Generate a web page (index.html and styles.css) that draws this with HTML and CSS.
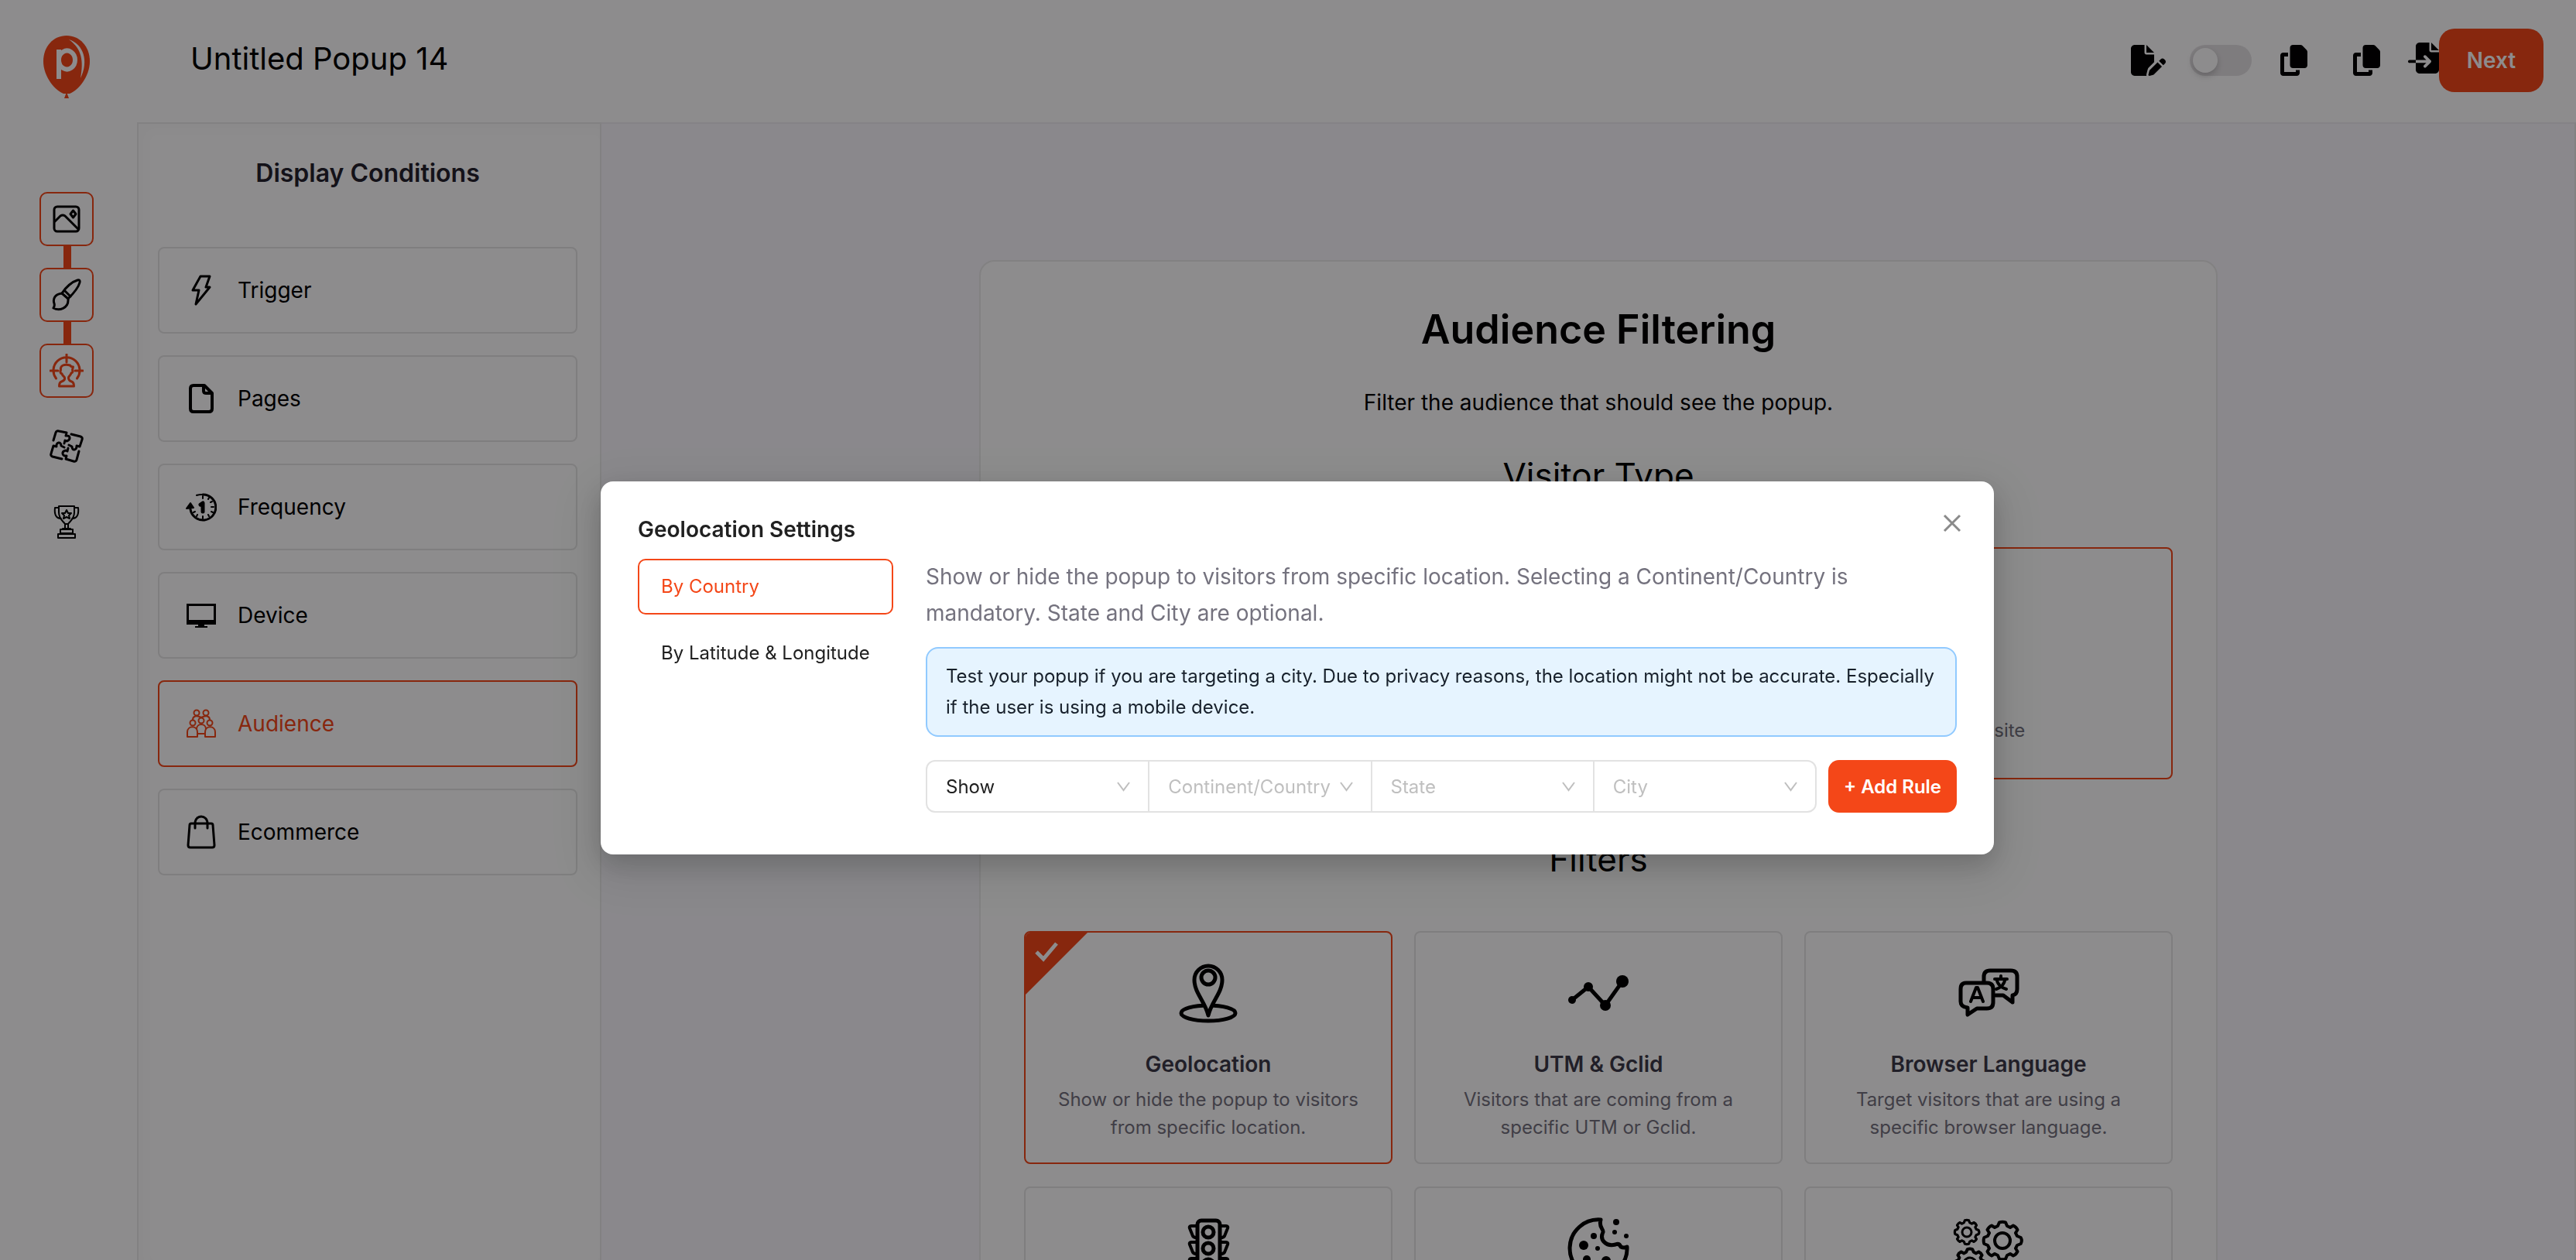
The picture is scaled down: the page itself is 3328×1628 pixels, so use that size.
FILE: index.html
```html
<!DOCTYPE html>
<html lang="en">
<head>
  <meta charset="UTF-8" />
  <title>Untitled Popup 14</title>
  <link rel="stylesheet" href="styles.css">
</head>
<body>
  <header class="topbar">
    <a class="logo" href="#" aria-label="Home">
      <svg width="60" height="82" viewBox="0 0 60 82">
        <path d="M30 0C13 0 0 14 0 33c0 20 15 38 26 42h8c11-4 26-22 26-42C60 14 47 0 30 0z" fill="#f44718"/>
        <path d="M30 73l-3 8h6z" fill="#f44718"/>
        <path d="M20 56V18M20 31a10.500 12 0 1 1 0 1" fill="none" stroke="#fff" stroke-width="6"/>
        <path d="M33 5c19 6 26 28 15 50 4-22 2-38-15-50z" fill="#fff"/>
      </svg>
    </a>
    <h1>Untitled Popup 14</h1>
    <div class="actions">
      <button class="icon-btn edit" aria-label="Edit">
        <svg width="45" height="40" viewBox="0 0 576 512"><path d="M0 64C0 28.700 28.700 0 64 0H224V128c0 17.700 14.300 32 32 32H384V285.700l-86.800 86.800c-10.300 10.300-17.500 23.100-21 37.200l-18.700 74.900c-2.300 9.200-1.800 18.800 1.300 27.500H64c-35.300 0-64-28.700-64-64V64zm384 64H256V0L384 128zM549.800 235.700l14.400 14.400c15.600 15.600 15.600 40.900 0 56.600l-29.400 29.400-71-71 29.400-29.400c15.600-15.600 40.900-15.600 56.600 0zM311.900 417L441.100 287.800l71 71L382.900 487.900c-4.100 4.100-9.200 7-14.900 8.400l-60.100 15c-5.500 1.400-11.200-.2-15.200-4.200s-5.600-9.700-4.200-15.200l15-60.100c1.400-5.600 4.300-10.800 8.400-14.900z"/></svg>
      </button>
      <input class="switch" type="checkbox" role="switch" aria-label="Published">
      <button class="icon-btn copy" aria-label="Copy">
        <svg width="35" height="40" viewBox="0 0 448 512"><path d="M208 0H332.100c12.700 0 24.900 5.100 33.900 14.100l67.900 67.900c9 9 14.100 21.200 14.100 33.900V336c0 26.500-21.500 48-48 48H208c-26.500 0-48-21.500-48-48V48c0-26.500 21.500-48 48-48zM48 128h80v64H64V448H256V416h64v48c0 26.500-21.500 48-48 48H48c-26.500 0-48-21.500-48-48V176c0-26.500 21.500-48 48-48z"/></svg>
      </button>
      <button class="icon-btn duplicate" aria-label="Duplicate">
        <svg width="35" height="40" viewBox="0 0 448 512"><path d="M208 0H332.100c12.700 0 24.900 5.100 33.900 14.100l67.900 67.900c9 9 14.100 21.200 14.100 33.900V336c0 26.500-21.500 48-48 48H208c-26.500 0-48-21.500-48-48V48c0-26.500 21.500-48 48-48zM48 128h80v64H64V448H256V416h64v48c0 26.500-21.500 48-48 48H48c-26.500 0-48-21.500-48-48V176c0-26.500 21.500-48 48-48z"/></svg>
      </button>
      <button class="icon-btn import" aria-label="Import">
        <svg width="40" height="40" viewBox="0 0 512 512"><path d="M128 64c0-35.300 28.700-64 64-64H352V128c0 17.700 14.300 32 32 32H512V448c0 35.300-28.700 64-64 64H192c-35.300 0-64-28.700-64-64V336H302.100l-39 39c-9.400 9.400-9.400 24.600 0 33.900s24.600 9.400 33.900 0l80-80c9.400-9.400 9.400-24.600 0-33.900l-80-80c-9.400-9.400-24.600-9.400-33.900 0s-9.400 24.600 0 33.900l39 39H128V64zm0 224v48H24c-13.300 0-24-10.700-24-24s10.700-24 24-24H128zM512 128H384V0L512 128z"/></svg>
      </button>
      <button class="next">Next</button>
    </div>
  </header>

  <div class="shell">
    <!-- STEPS -->
    <nav class="rail" aria-label="Steps">
      <a class="step done" href="#" aria-label="Template">
        <svg class="line" width="44" height="44" viewBox="0 0 44 44">
          <rect x="6" y="6" width="32" height="32" rx="4"/>
          <path d="M7 25l7-7q3-2 6 0l17 17M30.500 11l3.500 4.500-3.500 4.500-3.500-4.500z"/>
        </svg>
      </a>
      <a class="step done" href="#" aria-label="Design">
        <svg class="line" width="44" height="44" viewBox="0 0 44 44">
          <path d="M16 20C21 12 29 5 36 3q4-1 3 3c-2 8-9 15-15 21"/>
          <path d="M16 20c-9 1-12 7-10 13 1 3 0 4-1 6 7 4 20 1 19-12zM20 17l7 7M16 20l8 7" />
        </svg>
      </a>
      <a class="step current" href="#" aria-label="Conditions">
        <svg class="line" width="44" height="44" viewBox="0 0 44 44">
          <path d="M8.500 32a17 17 0 1 1 27 0M22 1v10M1 22h10M33 22h10"/>
          <path d="M14.500 21q-1.500 4 1.500 5c1 3 3 3 3.500 5s-1 4-4 5q-3 1-3 6h19q0-5-3-6c-3-1-4-3-4-5s3-3 3.500-6q3-1 1.500-4l1-4q-3 0-4-2c-7-2-13 0-12 6z"/>
        </svg>
      </a>
      <a class="step" href="#" aria-label="Integrations">
        <svg class="line" width="44" height="44" viewBox="0 0 44 44">
          <path d="M5 14L8 4q1-3 4-2l10 2-1 4c6-1 7 5 1 7l-2-1-1 4"/>
          <path d="M28 6l12 3q3 1 2 4l-3 9-4-1c0 6-6 7-6 1l-4-2"/>
          <path d="M38 28l-3 11q-1 3-4 2l-10-3 1-4c-6 1-7-6-1-7l2 1 1-4"/>
          <path d="M16 38L4 35q-3-1-2-4l3-10 4 1c-1-6 6-7 6-1l4 2"/>
        </svg>
      </a>
      <a class="step" href="#" aria-label="Launch">
        <svg class="line thin" width="44" height="44" viewBox="0 0 44 44">
          <path d="M12 1h20v8c0 8-5 11-8 15h-4c-3-4-8-7-8-15zM12 3H7c-1 8 1 14 8 14M32 3h5c1 8-1 14-8 14M20 24v6M24 24v6M17 30h10M14 31h16v5H14zM11 37h22v5H11z"/>
          <path d="M22 6l2 4 4 0-3 3 1 4-4-2-4 2 1-4-3-3 4 0z"/>
        </svg>
      </a>
    </nav>

    <!-- DISPLAY CONDITIONS -->
    <aside class="sidebar">
      <h2>Display Conditions</h2>
      <nav class="conditions" aria-label="Display Conditions">
        <a class="condition" href="#">
          <svg class="line" width="40" height="40" viewBox="0 0 40 40"><path d="M19 2h12l-5 14h5L13 38l4-18H9z"/></svg>
          Trigger
        </a>
        <a class="condition" href="#">
          <svg class="line bold" width="40" height="40" viewBox="0 0 40 40"><path d="M10 3h14l10 10v20q0 4-4 4H10q-4 0-4-4V7q0-4 4-4zM23 4v6q0 3 3 3h7"/></svg>
          Pages
        </a>
        <a class="condition" href="#">
          <svg class="line thin" width="40" height="40" viewBox="0 0 40 40">
            <path d="M14 5a17 17 0 0 1 8-1"/>
            <path d="M22 4a16.500 16.500 0 1 1-16 19" stroke-width="3"/>
            <path d="M22 6v3M30 8l-1 2M34 13l-2 1M36 20h-3M35 27l-2-1M30 32l-1-2M22 35v-3M14 32l1-2M10 27l2-1"/>
            <path d="M1 22l5-7 4 6z" fill="#000"/>
            <path d="M19 17l3-2v11" stroke-width="5"/>
          </svg>
          Frequency
        </a>
        <a class="condition" href="#">
          <svg width="40" height="40" viewBox="0 0 40 40"><path d="M1 5h38v27H24v2h4v2H12v-2h4v-2H1zm3 3v18h32V8z" fill-rule="evenodd"/></svg>
          Device
        </a>
        <a class="condition active" href="#">
          <svg class="line thin" width="40" height="40" viewBox="0 0 40 40">
            <circle cx="14" cy="6" r="3.500"/><circle cx="26" cy="6" r="3.500"/><circle cx="9" cy="19" r="3.500"/><circle cx="31" cy="19" r="3.500"/><circle cx="20" cy="16" r="3.500"/>
            <path d="M2 37v-6c0-9 13-9 13 0v6zM25 37v-6c0-9 13-9 13 0v6zM15 33h10M14 27c0-8 12-8 12 0M9 15c0-5 5-6 11-3M31 15c0-5-5-6-11-3"/>
          </svg>
          Audience
        </a>
        <a class="condition" href="#">
          <svg class="line" width="40" height="44" viewBox="0 0 40 44"><path d="M7 11h26q2 0 2 2l2 26q0 3-3 3H6q-3 0-3-3l2-26q0-2 2-2zM12 17v-6c0-12 16-12 16 0v6"/></svg>
          Ecommerce
        </a>
      </nav>
    </aside>

    <main class="canvas">
      <section class="panel">
        <h2>Audience Filtering</h2>
        <p class="lead">Filter the audience that should see the popup.</p>

        <h3>Visitor Type</h3>
        <div class="types">
          <button class="type selected"><span>All the visitors on your website</span></button>
        </div>

        <h3>Filters</h3>
        <div class="filters">
          <button class="filter selected">
            <svg class="mark" width="80" height="80" viewBox="0 0 80 80">
              <path d="M0 0h80L0 80z" fill="#f44718"/>
              <path d="M14 25l9 9 17-20" fill="none" stroke="#fff" stroke-width="5"/>
            </svg>
            <svg class="heavy" width="80" height="80" viewBox="0 0 80 80">
              <ellipse cx="40" cy="66" rx="35" ry="10"/>
              <path d="M40 69C36 51 22 40 22 23a18 18 0 0 1 36 0C58 40 44 51 40 69z" fill="#fff"/>
              <circle cx="40" cy="20" r="9"/>
            </svg>
            <strong>Geolocation</strong>
            <span>Show or hide the popup to visitors from specific location.</span>
          </button>
          <button class="filter">
            <svg class="heavy" width="80" height="80" viewBox="0 0 80 80">
              <path d="M6 49l21-17 22 24 22-31"/>
              <g fill="#000" stroke="none"><circle cx="6" cy="49" r="5"/><circle cx="27" cy="32" r="6"/><circle cx="49" cy="56" r="7"/><circle cx="71" cy="25" r="8"/></g>
            </svg>
            <strong>UTM &amp; Gclid</strong>
            <span>Visitors that are coming from a specific UTM or Gclid.</span>
          </button>
          <button class="filter">
            <svg class="heavy" width="80" height="80" viewBox="0 0 80 80">
              <path d="M34 25v-6q0-8 8-8h27q8 0 8 8v16q0 7-6 8v9L59 43h-10"/>
              <path d="M11 27h27q8 0 8 8v17q0 8-8 8H25L13 68v-9q-9-1-9-8V35q0-8 7-8z"/>
              <path d="M17 51l7-18h2l7 18M20 46h10M48 22h16M56 18v4M51 24q2 8 12 11M61 24q-2 8-11 11" stroke-width="4"/>
            </svg>
            <strong>Browser Language</strong>
            <span>Target visitors that are using a specific browser language.</span>
          </button>
          <button class="filter" aria-label="Traffic Source">
            <svg class="heavy" width="80" height="80" viewBox="0 0 80 80">
              <rect x="26" y="4" width="29" height="72" rx="5"/>
              <circle cx="40" cy="19" r="7"/><circle cx="40" cy="40" r="7"/><circle cx="40" cy="61" r="7"/>
              <path d="M25 11h-7q-3 0-2 3l4 10q1 2 5 2M25 32h-7q-3 0-2 3l4 10q1 2 5 2M25 53h-7q-3 0-2 3l4 10q1 2 5 2M56 11h7q3 0 2 3l-4 10q-1 2-5 2M56 32h7q3 0 2 3l-4 10q-1 2-5 2M56 53h7q3 0 2 3l-4 10q-1 2-5 2" stroke-width="4"/>
            </svg>
          </button>
          <button class="filter" aria-label="Cookie">
            <svg class="heavy" width="80" height="80" viewBox="0 0 80 80">
              <path d="M43 3A37 37 0 1 0 77 38q-4 2-8 0-2-5-7-3c-12 3-21-6-16-16 1-4-6-6-3-16z"/>
              <g fill="#000" stroke="none"><circle cx="21" cy="36" r="6"/><circle cx="34" cy="24" r="4"/><circle cx="39" cy="40" r="3"/><circle cx="63" cy="6" r="4"/><circle cx="61" cy="19" r="3"/><circle cx="76" cy="24" r="3"/><circle cx="25" cy="54" r="5"/><circle cx="50" cy="56" r="6"/></g>
            </svg>
          </button>
          <button class="filter" aria-label="Advanced">
            <svg class="line" width="92" height="84" viewBox="0 0 92 84">
              <defs>
                <path id="gear" d="M23.700-4Q26 0 23.700 4L19 6 17 10l2.500 4q-2 4-5.500 5.500L10 17l-4 2-2 4.700q-4 1.300-8 0L-6 19l-4-2-4 2.500q-4-2-5.500-5.500l2.500-4-2-4-4.700-2q-1.300-4 0-8L-19-6l2-4-2.500-4q2-4 5.500-5.500L-10-17l4-2 2-4.700q4-1.300 8 0L6-19l4 2 4-2.500q4 2 5.500 5.500L17-10l2 4z"/>
              </defs>
              <use href="#gear" transform="translate(64 30)" stroke-width="4"/><circle cx="64" cy="30" r="10" stroke-width="4"/>
              <use href="#gear" transform="translate(18 19) scale(.64)" stroke-width="5"/><circle cx="18" cy="19" r="6"/>
              <use href="#gear" transform="translate(22 60) scale(.8)" stroke-width="5"/><circle cx="22" cy="60" r="8"/>
            </svg>
          </button>
        </div>
      </section>
    </main>
  </div>

  <!-- GEOLOCATION MODAL -->
  <div class="overlay">
    <div class="modal" role="dialog" aria-modal="true" aria-labelledby="modal-title">
      <div class="modal-head">
        <h2 id="modal-title">Geolocation Settings</h2>
        <button class="close" aria-label="Close">
          <svg width="24" height="24" viewBox="0 0 24 24"><path d="M2 2l20 20M22 2L2 22" stroke="#8a8a8a" stroke-width="3"/></svg>
        </button>
      </div>
      <div class="modal-body">
        <div class="tabs" role="tablist">
          <button class="tab active" role="tab" aria-selected="true">By Country</button>
          <button class="tab" role="tab">By Latitude &amp; Longitude</button>
        </div>
        <div class="settings">
          <p class="hint">Show or hide the popup to visitors from specific location. Selecting a Continent/Country is mandatory. State and City are optional.</p>
          <p class="alert">Test your popup if you are targeting a city. Due to privacy reasons, the location might not be accurate. Especially if the user is using a mobile device.</p>
          <form class="rule">
            <div class="selects">
              <select class="filled" aria-label="Action"><option>Show</option></select>
              <select aria-label="Continent/Country"><option>Continent/Country</option></select>
              <select aria-label="State"><option>State</option></select>
              <select aria-label="City"><option>City</option></select>
            </div>
            <button class="add" type="button">+ Add Rule</button>
          </form>
        </div>
      </div>
    </div>
  </div>
</body>
</html>
```
FILE: styles.css
```css
* { box-sizing: border-box; }
body {
  margin: 0;
  height: 100vh;
  display: flex;
  flex-direction: column;
  overflow: hidden;
  font-family: Inter, "Liberation Sans", sans-serif;
  font-size: 24px;
  color: #000;
  background: #fff;
}
h1, h2, h3, p { margin: 0; }
a { color: inherit; text-decoration: none; }
button {
  font: inherit;
  color: inherit;
  background: none;
  border: none;
  padding: 0;
  cursor: pointer;
}
svg { display: block; flex: none; }

/* line icons */
.line, .heavy {
  fill: none;
  stroke: currentColor;
  stroke-width: 3;
  stroke-linecap: round;
  stroke-linejoin: round;
}
.thin { stroke-width: 2; }
.bold { stroke-width: 4; }
.heavy { stroke-width: 5; }

/* top bar */
.topbar {
  display: flex;
  align-items: center;
  height: 158px;
  padding: 0 42px 2px 0;
  flex: none;
}
.logo {
  width: 172px;
  margin-right: 74px;
  padding-top: 18px;
  display: flex;
  justify-content: center;
}
.topbar h1 {
  font-size: 40px;
  font-weight: 400;
  line-height: 48px;
  padding-bottom: 4px;
}
.actions {
  margin-left: auto;
  display: flex;
  align-items: center;
}
.edit { margin-right: 31px; }
.copy { margin: 0 59px 0 37px; }
.duplicate { margin-right: 36px; }
.import { padding-bottom: 6px; }
.switch {
  appearance: none;
  width: 80px;
  height: 40px;
  margin: 0;
  padding: 4px;
  border-radius: 20px;
  background: #e4e2e4;
}
.switch::before {
  content: "";
  display: block;
  width: 32px;
  height: 32px;
  border-radius: 50%;
  background: #fff;
  box-shadow: 0 4px 8px rgba(0,0,0,0.2);
}
.next {
  width: 135px;
  height: 82px;
  border-radius: 20px;
  background: #f44718;
  color: #fff;
  font-size: 28px;
  font-weight: 600;
}

.shell {
  flex: 1;
  display: flex;
  min-height: 0;
}

/* steps */
.rail {
  width: 177px;
  padding: 90px 0 0 51px;
  display: flex;
  flex-direction: column;
  gap: 28px;
  flex: none;
}
.step {
  position: relative;
  width: 70px;
  height: 70px;
  display: flex;
  align-items: center;
  justify-content: center;
  border: 2px solid transparent;
  border-radius: 10px;
}
.step.done, .step.current { border-color: #f44718; }
.step.current { color: #f44718; }
.step.done::after {
  content: "";
  position: absolute;
  top: 68px;
  left: 29px;
  width: 10px;
  height: 28px;
  background: #f44718;
}

/* sidebar */
.sidebar {
  width: 600px;
  padding: 42px 29px 0 25px;
  border: 2px solid #ebebeb;
  border-bottom: none;
  box-shadow: inset 8px 8px 16px rgba(0,0,0,0.02);
  flex: none;
}
.sidebar h2 {
  font-size: 32px;
  font-weight: 600;
  line-height: 44px;
  text-align: center;
  color: #23222c;
}
.conditions {
  margin-top: 73px;
  display: flex;
  flex-direction: column;
  gap: 28px;
}
.condition {
  display: flex;
  align-items: center;
  gap: 27px;
  height: 112px;
  padding-left: 34px;
  border: 2px solid #e6e6e6;
  border-radius: 8px;
  font-size: 28px;
}
.condition.active { border-color: #f44718; color: #f44718; }

/* main panel */
.canvas {
  flex: 1;
  padding: 176px 0 0 27px;
  background: #f9f8fd;
  border-top: 2px solid #f0eff3;
  border-right: 2px solid #ebebeb;
  overflow: hidden;
}
.panel {
  width: 1600px;
  margin: 0 auto;
  padding: 56px;
  background: #fff;
  border: 2px solid #ebebeb;
  border-radius: 20px;
  text-align: center;
}
.panel h2 {
  font-size: 52px;
  font-weight: 600;
  line-height: 64px;
}
.lead {
  margin-top: 40px;
  font-size: 28px;
  line-height: 44px;
}
.panel h3 {
  margin-top: 44px;
  font-size: 44px;
  font-weight: 400;
  line-height: 56px;
}
.types, .filters { display: grid; gap: 29px 28px; }
.types {
  grid-template-columns: 1fr 1fr;
  margin: 65px 0 75px;
}
.type {
  grid-column: 2;
  height: 300px;
  padding-top: 172px;
  border: 2px solid #f44718;
  border-radius: 8px;
  color: #74727e;
}
.filters {
  grid-template-columns: repeat(3, 1fr);
  margin-top: 65px;
}
.filter {
  position: relative;
  display: flex;
  flex-direction: column;
  align-items: center;
  min-height: 301px;
  padding: 38px 32px 27px;
  border: 2px solid #e6e6e6;
  border-radius: 8px;
  color: #74727e;
  line-height: 36px;
}
.filter.selected { border-color: #f44718; }
.filter svg { color: #000; }
.filter strong {
  margin: 34px 0 10px;
  font-size: 28px;
  font-weight: 600;
  color: #3b3a48;
}
.mark {
  position: absolute;
  top: 0;
  left: 0;
  border-top-left-radius: 6px;
}

/* modal */
.overlay {
  position: fixed;
  inset: 0;
  display: flex;
  align-items: center;
  justify-content: center;
  padding: 98px 0 0 24px;
  background: rgba(3,0,3,0.45);
}
.modal {
  width: 1800px;
  padding: 40px 48px 54px;
  background: #fff;
  border-radius: 16px;
  box-shadow: 0 12px 32px rgba(0,0,0,0.16), 0 18px 56px 16px rgba(0,0,0,0.08);
}
.modal-head {
  display: flex;
  align-items: center;
  justify-content: space-between;
  margin-right: -6px;
}
.modal-head h2 {
  font-size: 28px;
  font-weight: 600;
  line-height: 44px;
  color: #212121;
}
.close { padding: 2px 0 18px; }
.modal-body {
  display: flex;
  gap: 42px;
  margin-top: 16px;
}
.tabs {
  width: 330px;
  display: flex;
  flex-direction: column;
  gap: 14px;
  flex: none;
}
.tab {
  height: 72px;
  padding: 0 28px 2px;
  border: 2px solid transparent;
  border-radius: 10px;
  text-align: left;
  white-space: nowrap;
  color: #212121;
}
.tab.active { border-color: #f44718; color: #f44718; }
.settings { flex: 1; }
.hint {
  font-size: 28px;
  line-height: 47px;
  color: #74727e;
}
.alert {
  margin-top: 20px;
  padding: 16px 24px;
  border: 2px solid #91caff;
  border-radius: 16px;
  background: #e6f4ff;
  line-height: 40px;
  color: #17202b;
}
.rule {
  display: flex;
  gap: 15px;
  margin-top: 30px;
}
.selects {
  flex: 1;
  display: flex;
  border: 2px solid #e2e2e2;
  border-radius: 12px;
}
select {
  appearance: none;
  flex: 1;
  width: 0;
  height: 64px;
  padding: 0 24px;
  border: none;
  border-left: 2px solid #e2e2e2;
  font: inherit;
  color: #bfbfbf;
  background: url('data:image/svg+xml,<svg xmlns="http://www.w3.org/2000/svg" width="17" height="13" viewBox="0 0 17 13"><path d="M1 1l7.500 10L16 1" fill="none" stroke="%23bfbfbf" stroke-width="2"/></svg>') no-repeat right 23px center;
}
.filled { border-left: none; color: #212121; }
.add {
  width: 166px;
  height: 68px;
  border-radius: 14px;
  background: #f44718;
  color: #fff;
  font-weight: 600;
}
```
